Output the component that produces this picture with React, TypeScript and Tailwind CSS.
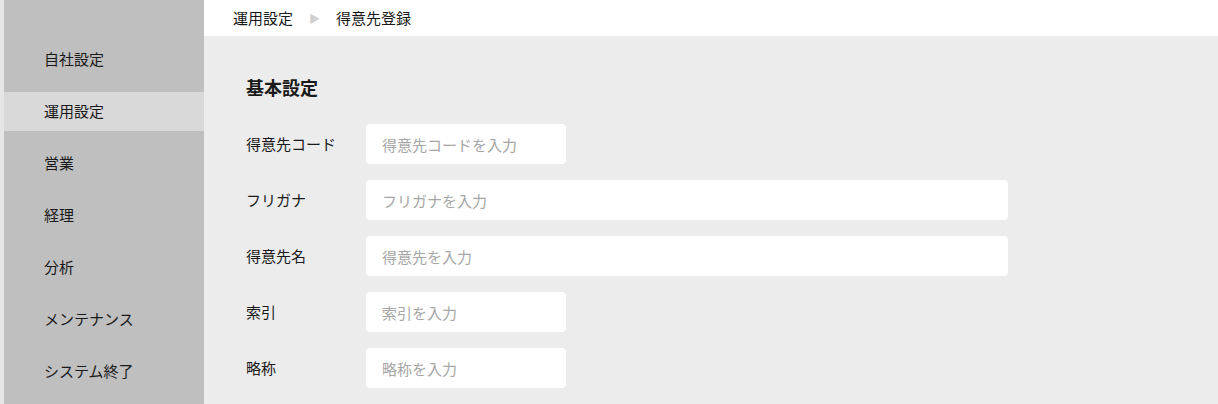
const MENU = ['自社設定', '運用設定', '営業', '経理', '分析', 'メンテナンス', 'システム終了'];

const FIELDS = [
  { label: '得意先コード', placeholder: '得意先コードを入力', wide: false },
  { label: 'フリガナ', placeholder: 'フリガナを入力', wide: true },
  { label: '得意先名', placeholder: '得意先を入力', wide: true },
  { label: '索引', placeholder: '索引を入力', wide: false },
  { label: '略称', placeholder: '略称を入力', wide: false },
];

export default function App() {
  return (
    <div
      className="flex h-[404px] w-[1218px] overflow-hidden bg-[#ececec] text-[#1a1a1a]"
      style={{ fontFamily: '"Noto Sans CJK JP", "Noto Sans", sans-serif' }}
    >
      <div className="w-1 shrink-0 bg-[#e6e6e6]" />

      {/* Sidebar */}
      <aside className="flex w-[200px] shrink-0 flex-col bg-[#bfbfbf] pt-[40px]">
        {MENU.map(item => (
          <div
            key={item}
            className={`mb-[13px] flex h-10 items-center pl-10 text-[15px] ${
              item === '運用設定' ? 'bg-[#d9d9d9]' : ''
            }`}
          >
            {item}
          </div>
        ))}
      </aside>

      <main className="flex-1">
        {/* Breadcrumb */}
        <div className="flex h-9 items-center gap-4 bg-white pl-[29px] text-[15px]">
          <span>運用設定</span>
          <span className="text-[11px] text-[#cfcfcf]">▶</span>
          <span>得意先登録</span>
        </div>

        <div className="px-[42px] pt-[37px]">
          <h2 className="mb-[23px] text-[18px] font-bold leading-7">基本設定</h2>
          <div className="flex flex-col gap-4">
            {FIELDS.map(f => (
              <div key={f.label} className="flex items-center">
                <label className="w-[120px] shrink-0 text-[15px]">{f.label}</label>
                <input
                  type="text"
                  placeholder={f.placeholder}
                  className={`h-10 rounded bg-white px-4 text-[15px] placeholder:text-[#a6a6a6] focus:outline-none ${
                    f.wide ? 'w-[642px]' : 'w-[200px]'
                  }`}
                />
              </div>
            ))}
          </div>
        </div>
      </main>
    </div>
  );
}
